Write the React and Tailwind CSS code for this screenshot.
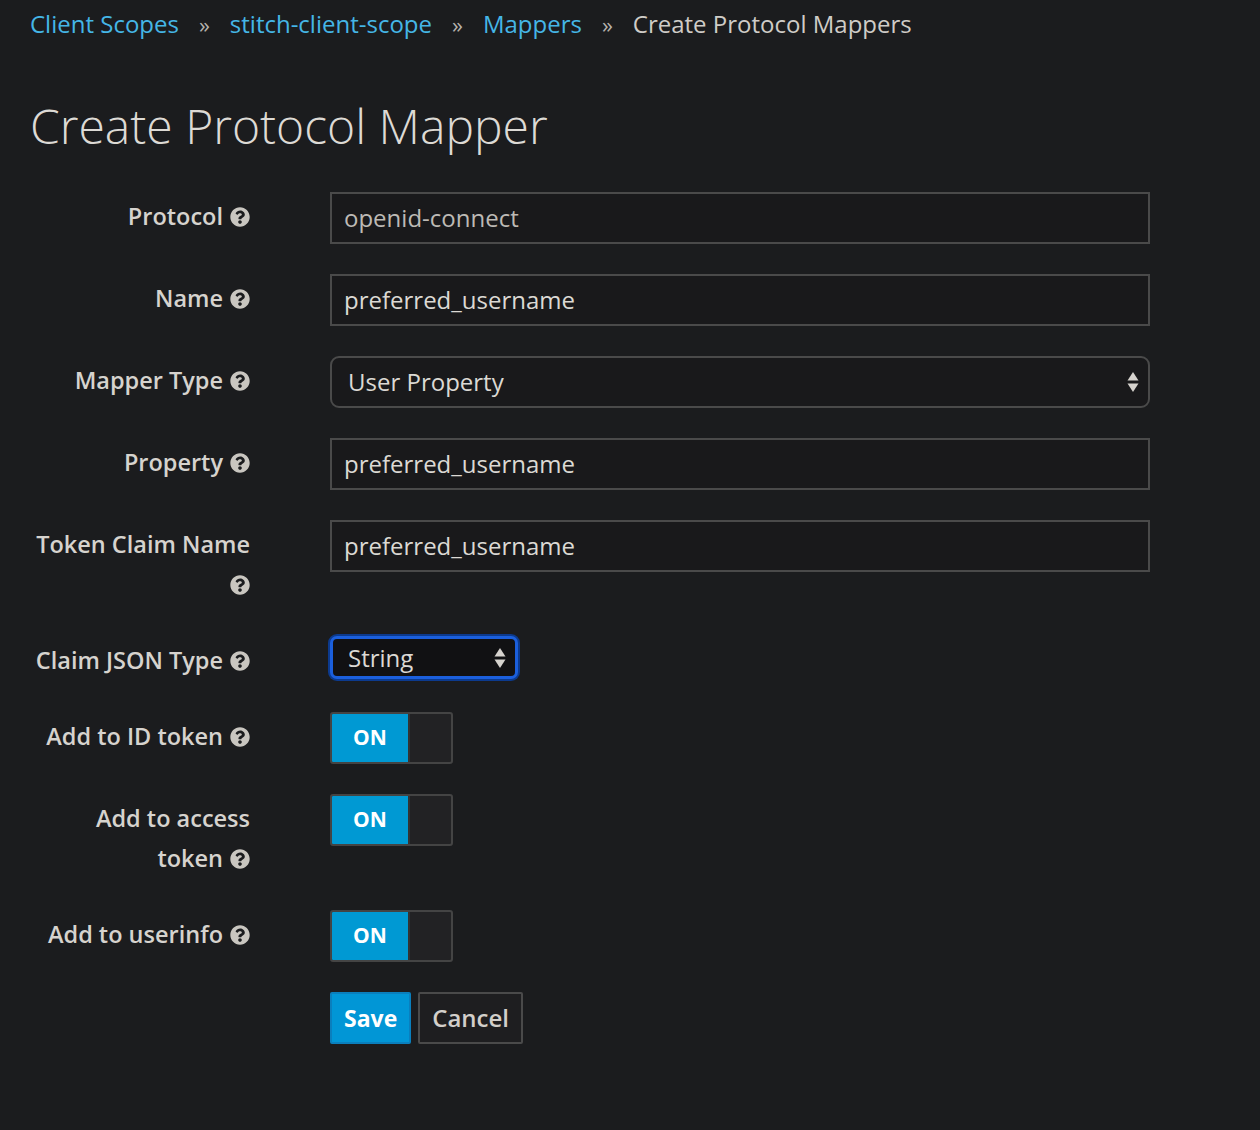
import React from 'react'
import { FaQuestionCircle } from 'react-icons/fa'

const Help = () => (
  <FaQuestionCircle className="inline-block ml-[7px] mb-[4px] text-[#c9c6c0]" size={20} />
)

const Arrows = () => (
  <svg width="12" height="22" viewBox="0 0 12 22" className="shrink-0">
    <path d="M6 1 L11.5 9.5 L0.5 9.5 Z" fill="#d6d3ce" />
    <path d="M6 21 L11.5 12.5 L0.5 12.5 Z" fill="#d6d3ce" />
  </svg>
)

const Row = ({ label, children }) => (
  <div className="flex items-start mb-[30px]">
    <div className="w-[220px] shrink-0 text-right pt-[4px] pb-[2px] leading-[40px] text-[23.5px] font-semibold text-[#d6d3ce] whitespace-nowrap">
      {label}
    </div>
    <div className="ml-[80px] flex-1">{children}</div>
  </div>
)

const TextInput = ({ value, muted }) => (
  <div
    className={
      'w-[820px] h-[52px] border-2 border-[#4a4a4a] bg-[#19191b] px-[12px] flex items-center text-[24px] ' +
      (muted ? 'text-[#bdbab5]' : 'text-[#dcd9d4]')
    }
  >
    {value}
  </div>
)

const Toggle = () => (
  <div className="w-[123px] h-[52px] border-2 border-[#444] rounded-[3px] flex overflow-hidden bg-[#222224]">
    <div className="w-[78px] h-full bg-[#0099d3] flex items-center justify-center text-white font-bold text-[21px] border-r-2 border-[#333]">
      ON
    </div>
    <div className="flex-1" />
  </div>
)

export default function App() {
  return (
    <div
      className="min-h-[1130px] bg-[#1b1c1e] pl-[30px] pb-[40px] text-[#d6d3ce]"
      style={{ fontFamily: '"Open Sans", "Noto Sans", sans-serif' }}
    >
      {/* breadcrumb */}
      <div className="h-[48px] flex items-center text-[24px]">
        <span className="text-[#45b6e6]">Client Scopes</span>
        <span className="px-[20px] text-[#b5b2ad] text-[22px]">»</span>
        <span className="text-[#45b6e6]">stitch-client-scope</span>
        <span className="px-[20px] text-[#b5b2ad] text-[22px]">»</span>
        <span className="text-[#45b6e6]">Mappers</span>
        <span className="px-[20px] text-[#b5b2ad] text-[22px]">»</span>
        <span className="text-[#cfccc7]">Create Protocol Mappers</span>
      </div>

      <h1 className="mt-[49px] mb-[37px] text-[48px] leading-[58px] font-light text-[#dddad5]">
        Create Protocol Mapper
      </h1>

      <Row label={<>Protocol<Help /></>}>
        <TextInput value="openid-connect" muted />
      </Row>
      <Row label={<>Name<Help /></>}>
        <TextInput value="preferred_username" />
      </Row>
      <Row label={<>Mapper Type<Help /></>}>
        <div className="w-[820px] h-[52px] border-2 border-[#4a4a4a] rounded-[9px] bg-[#19191b] pl-[16px] pr-[9px] flex items-center justify-between text-[24px] text-[#dcd9d4]">
          <span>User Property</span>
          <Arrows />
        </div>
      </Row>
      <Row label={<>Property<Help /></>}>
        <TextInput value="preferred_username" />
      </Row>
      <Row label={<>Token Claim Name<br /><Help /></>}>
        <TextInput value="preferred_username" />
      </Row>
      <Row label={<>Claim JSON Type<Help /></>}>
        <div className="w-[188px] h-[43px] border-[3px] border-[#1b5fdc] rounded-[7px] bg-[#111113] shadow-[0_0_0_2px_#0c3a8e] pl-[15px] pr-[9px] flex items-center justify-between text-[24px] text-[#dcd9d4]">
          <span>String</span>
          <Arrows />
        </div>
      </Row>
      <Row label={<>Add to ID token<Help /></>}>
        <Toggle />
      </Row>
      <Row label={<>Add to access<br />token<Help /></>}>
        <Toggle />
      </Row>
      <Row label={<>Add to userinfo<Help /></>}>
        <Toggle />
      </Row>

      <div className="flex ml-[300px] gap-[7px]">
        <button className="h-[52px] px-[12px] bg-[#0196d6] border-2 border-[#0a7fbd] rounded-[2px] text-white font-bold text-[23px]">
          Save
        </button>
        <button className="h-[52px] px-[12px] bg-[#1e1e20] border-2 border-[#4a4a4a] rounded-[2px] text-[#d2cfca] font-semibold text-[24px]">
          Cancel
        </button>
      </div>
    </div>
  )
}
